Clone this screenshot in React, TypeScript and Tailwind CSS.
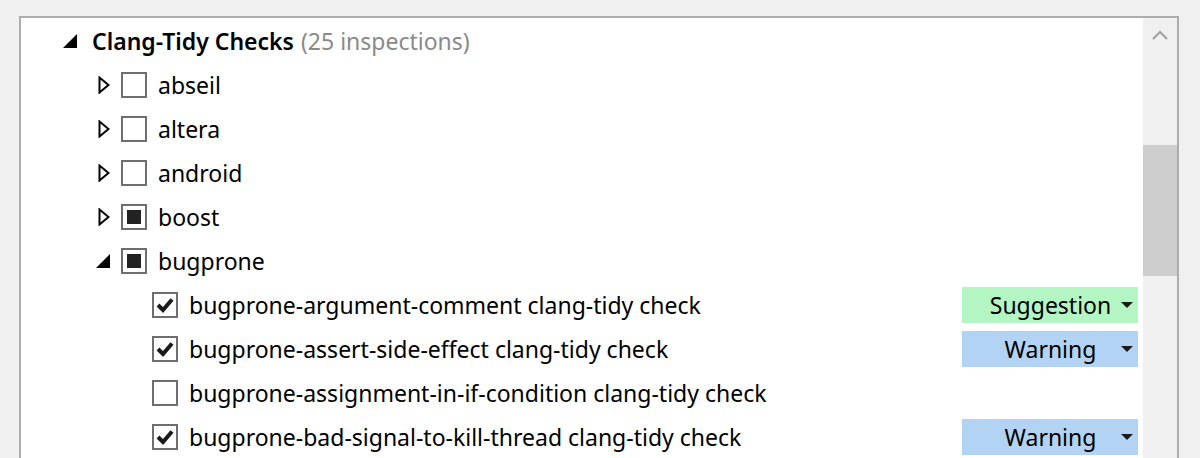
import React from 'react';

type Level = 'Suggestion' | 'Warning';

const groups = [
	{ name: 'abseil', state: 'off' },
	{ name: 'altera', state: 'off' },
	{ name: 'android', state: 'off' },
	{ name: 'boost', state: 'mixed' },
];

const checks: { name: string; checked: boolean; level?: Level }[] = [
	{ name: 'bugprone-argument-comment clang-tidy check', checked: true, level: 'Suggestion' },
	{ name: 'bugprone-assert-side-effect clang-tidy check', checked: true, level: 'Warning' },
	{ name: 'bugprone-assignment-in-if-condition clang-tidy check', checked: false },
	{ name: 'bugprone-bad-signal-to-kill-thread clang-tidy check', checked: true, level: 'Warning' },
];

const Expanded = () => (
	<svg width="14" height="14" viewBox="0 0 14 14" className="shrink-0">
		<polygon points="14,0 14,14 0,14" fill="#000" />
	</svg>
);

const Collapsed = () => (
	<svg width="12" height="18" viewBox="0 0 12 18" className="shrink-0">
		<polygon points="1.5,1.5 10.5,9 1.5,16.5" fill="none" stroke="#000" strokeWidth="2" />
	</svg>
);

const Checkbox = ({ state }: { state: 'off' | 'on' | 'mixed' }) => (
	<div className="w-[26px] h-[26px] border-2 border-[#6e6e6e] bg-white flex items-center justify-center shrink-0">
		{state === 'mixed' && <div className="w-[14px] h-[14px] bg-[#222]" />}
		{state === 'on' && (
			<svg width="20" height="20" viewBox="0 0 20 20">
				<polyline points="3,10 8,15 17,4.5" fill="none" stroke="#1a1a1a" strokeWidth="4" />
			</svg>
		)}
	</div>
);

const Badge = ({ level }: { level: Level }) => (
	<div
		className={
			'w-[176px] h-[36px] flex items-center ' +
			(level === 'Suggestion' ? 'bg-[#b3f5c3]' : 'bg-[#b3d3f5]')
		}
	>
		<span className="flex-1 text-center pl-[18px]">{level}</span>
		<svg width="12" height="6" viewBox="0 0 12 6" className="mr-[5px] shrink-0">
			<polygon points="0,0 12,0 6,6" fill="#1a1a1a" />
		</svg>
	</div>
);

export default function App() {
	return (
		<div
			className="w-[1200px] h-[458px] bg-[#f0f0f0] pt-[16px] pl-[19px] overflow-hidden text-[23px] text-black"
			style={{ fontFamily: '"Noto Sans", "Open Sans", sans-serif' }}
		>
			<div className="w-[1160px] h-[460px] border-2 border-b-0 border-[#adadad] bg-white flex">
				<div className="flex-1 pt-[1px] pr-[5px]">
					<div className="h-[44px] flex items-center pl-[42px]">
						<Expanded />
						<span className="ml-[15px] font-semibold">Clang-Tidy Checks</span>
						<span className="ml-[7px] text-[#8a8a8a]">(25 inspections)</span>
					</div>
					{groups.map((g) => (
						<div key={g.name} className="h-[44px] flex items-center pl-[77px]">
							<Collapsed />
							<div className="ml-[11px]">
								<Checkbox state={g.state as 'off' | 'mixed'} />
							</div>
							<span className="ml-[11px]">{g.name}</span>
						</div>
					))}
					<div className="h-[44px] flex items-center pl-[75px]">
						<Expanded />
						<div className="ml-[11px]">
							<Checkbox state="mixed" />
						</div>
						<span className="ml-[11px]">bugprone</span>
					</div>
					{checks.map((c) => (
						<div key={c.name} className="h-[44px] flex items-center pl-[131px]">
							<Checkbox state={c.checked ? 'on' : 'off'} />
							<span className="ml-[11px] flex-1">{c.name}</span>
							{c.level && <Badge level={c.level} />}
						</div>
					))}
				</div>
				<div className="w-[34px] bg-[#f0f0f0] flex flex-col items-center shrink-0">
					<svg width="16" height="10" viewBox="0 0 16 10" className="mt-[12px]">
						<polyline points="1,9 8,2 15,9" fill="none" stroke="#a0a0a0" strokeWidth="2" />
					</svg>
					<div className="w-full h-[131px] bg-[#cdcdcd] mt-[105px]" />
				</div>
			</div>
		</div>
	);
}
